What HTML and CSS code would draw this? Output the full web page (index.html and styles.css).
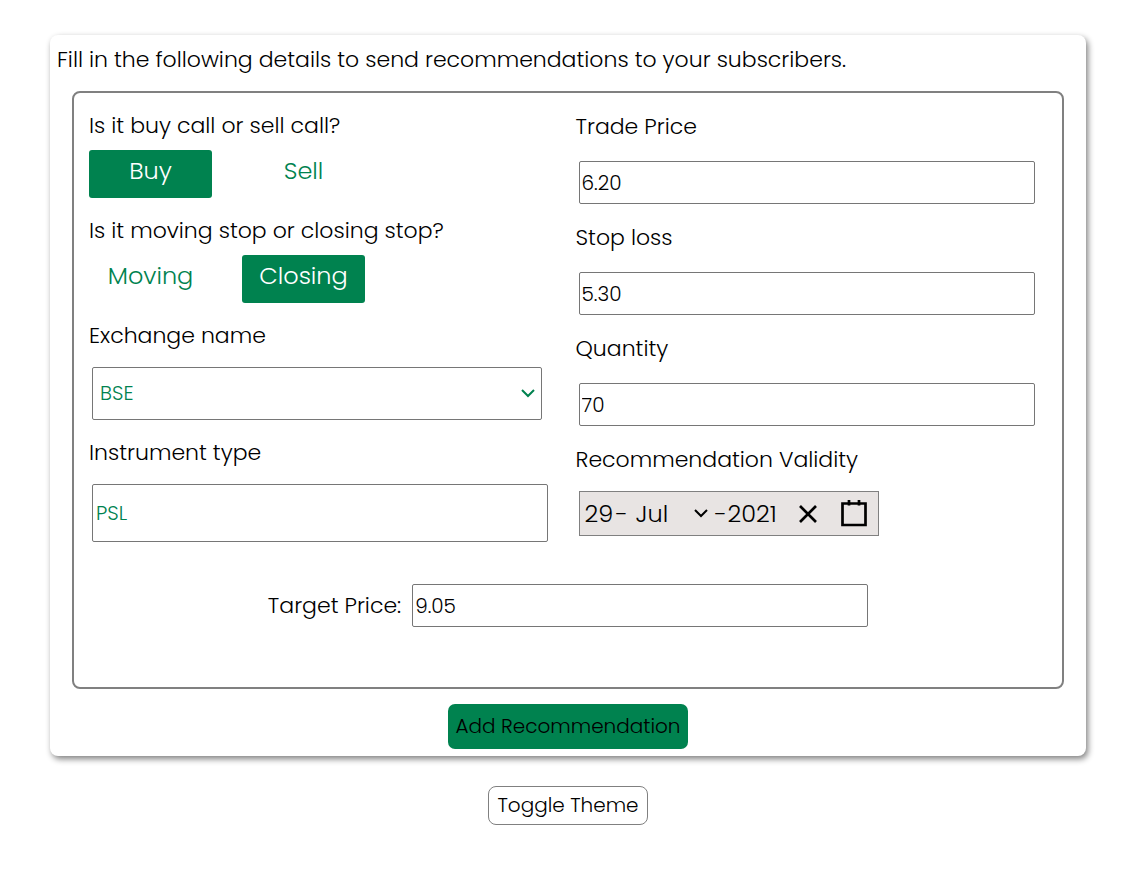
FILE: index.html
```html
<!DOCTYPE html>
<html lang="en">
<head>
<meta charset="utf-8">
<title>Add Recommendation</title>
<link rel="stylesheet" href="styles.css">
</head>
<body>
<form class="card">
  <p class="intro">Fill in the following details to send recommendations to your subscribers.</p>
  <div class="panel">
    <div class="columns">
      <div class="column">
        <div class="group">
          <span class="label" id="call-label">Is it buy call or sell call?</span>
          <div class="choices" role="group" aria-labelledby="call-label">
            <button type="button" class="choice selected" aria-pressed="true">Buy</button>
            <button type="button" class="choice" aria-pressed="false">Sell</button>
          </div>
        </div>
        <div class="group">
          <span class="label" id="stop-label">Is it moving stop or closing stop?</span>
          <div class="choices" role="group" aria-labelledby="stop-label">
            <button type="button" class="choice" aria-pressed="false">Moving</button>
            <button type="button" class="choice selected" aria-pressed="true">Closing</button>
          </div>
        </div>
        <div class="group spaced">
          <label class="label" for="exchange">Exchange name</label>
          <div class="select-wrap">
            <select id="exchange" class="field exchange"><option>BSE</option><option>NSE</option></select>
            <svg class="chevron" viewBox="0 0 16 10" aria-hidden="true"><path d="M2 2l6 6 6-6"/></svg>
          </div>
        </div>
        <div class="group spaced">
          <label class="label" for="instrument">Instrument type</label>
          <input id="instrument" class="field instrument" type="text" value="PSL">
        </div>
      </div>
      <div class="column">
        <div class="group right">
          <label class="label" for="trade">Trade Price</label>
          <input id="trade" class="field" type="text" value="6.20">
        </div>
        <div class="group right">
          <label class="label" for="loss">Stop loss</label>
          <input id="loss" class="field" type="text" value="5.30">
        </div>
        <div class="group right">
          <label class="label" for="quantity">Quantity</label>
          <input id="quantity" class="field" type="text" value="70">
        </div>
        <div class="group spaced">
          <span class="label" id="validity-label">Recommendation Validity</span>
          <div class="date" role="group" aria-labelledby="validity-label">
            <input class="day" type="text" value="29" aria-label="Day">
            <span class="dash">-</span>
            <div class="month-wrap">
              <select class="month" aria-label="Month"><option>Jul</option><option>Aug</option></select>
              <svg class="chevron month-chevron" viewBox="0 0 16 10" aria-hidden="true"><path d="M2 2l6 6 6-6"/></svg>
            </div>
            <span class="dash">-</span>
            <input class="year" type="text" value="2021" aria-label="Year">
            <button type="button" class="icon-button" aria-label="Clear date">
              <svg width="20" height="20" viewBox="0 0 20 20"><path d="M2 2l16 16M18 2l-16 16" fill="none" stroke="#000" stroke-width="2.700"/></svg>
            </button>
            <button type="button" class="icon-button calendar" aria-label="Open calendar">
              <svg width="26" height="28" viewBox="0 0 26 28"><path d="M1.500 3.500h23v21.500h-23zM8 0v5.500M18 0v5.500" fill="none" stroke="#000" stroke-width="2.700"/></svg>
            </button>
          </div>
        </div>
      </div>
    </div>
    <div class="target">
      <label class="label" for="target">Target Price:</label>
      <input id="target" class="field" type="text" value="9.05">
    </div>
  </div>
  <button type="button" class="submit">Add Recommendation</button>
</form>
<button type="button" class="theme">Toggle Theme</button>
</body>
</html>
```
FILE: styles.css
```css
* { box-sizing: border-box; }

body {
  margin: 0;
  padding: 35px 60px 30px 50px;
  display: flex;
  flex-direction: column;
  align-items: center;
  gap: 30px;
  background: #fff;
  color: #000;
  font: 300 22px/35px Poppins, Inter, sans-serif;
}

button, input, select { font: inherit; color: inherit; }

button { cursor: pointer; }

.card {
  width: 100%;
  display: flex;
  flex-direction: column;
  align-items: center;
  padding: 7px;
  border-radius: 8px;
  box-shadow: 2px 3px 6px #808080;
}

.intro { align-self: stretch; margin: 0 0 14px; }

.panel {
  align-self: stretch;
  margin: 0 15px 15px;
  padding: 15px 0 60px 15px;
  border: 2px solid #808080;
  border-radius: 8px;
}

.columns { display: grid; grid-template-columns: 1fr 1fr; }

.column { display: flex; flex-direction: column; gap: 15px; }

.column + .column { gap: 16px; padding-top: 1px; }

.group { display: flex; flex-direction: column; gap: 7px; }

.group.spaced { gap: 14px; }

.group.right { gap: 17px; }

.choices { display: flex; gap: 30px; }

.choice {
  width: 123px;
  height: 48px;
  padding: 0 0 8px;
  border: 0;
  border-radius: 3px;
  background: transparent;
  color: #00824f;
  font-size: 24px;
}

.choice.selected { background: #00824f; color: #fff; }

.field {
  width: 456px;
  max-width: calc(100% - 6px);
  height: 43px;
  margin: 0 3px;
  padding: 0 2px;
  border: 1px solid #767676;
  border-radius: 2px;
  background: #fff;
  font-size: 20px;
}

.select-wrap, .month-wrap { position: relative; }

.select-wrap { width: 456px; max-width: 100%; }

.exchange, .month { appearance: none; }

.exchange {
  width: 450px;
  height: 53px;
  padding: 0 7px;
  color: #00824f;
}

.instrument { height: 58px; color: #00824f; padding: 0 3px; }

.chevron {
  position: absolute;
  top: 21px;
  right: 9px;
  width: 16px;
  height: 10px;
  fill: none;
  stroke: #00824f;
  stroke-width: 2;
  pointer-events: none;
}

.date {
  display: flex;
  align-items: center;
  width: 300px;
  height: 45px;
  margin-left: 3px;
  padding: 0 5px;
  border: 1px solid #808080;
  background: #e8e4e3;
  font-size: 24px;
}

.date input, .month {
  padding: 0;
  border: 0;
  background: transparent;
}

.date .day { width: 31px; }

.dash { width: 13px; }

.month-wrap { width: 86px; padding-left: 7px; }

.month { width: 74px; }

.month-chevron { top: 12px; right: 6px; stroke: #000; }

.date .year { width: 70px; }

.icon-button {
  display: flex;
  padding: 0;
  border: 0;
  background: transparent;
}

.icon-button.calendar { margin-left: 23px; }

.target {
  display: flex;
  justify-content: center;
  align-items: center;
  gap: 8px;
  margin: 42px 12px 0 0;
}

.submit {
  height: 45px;
  padding: 0 8px;
  border: 0;
  border-radius: 7px;
  background: #00824f;
  font-size: 20px;
}

.theme {
  height: 39px;
  padding: 0 8px;
  border: 1px solid #808080;
  border-radius: 8px;
  background: #fff;
  font-size: 20px;
}
```
